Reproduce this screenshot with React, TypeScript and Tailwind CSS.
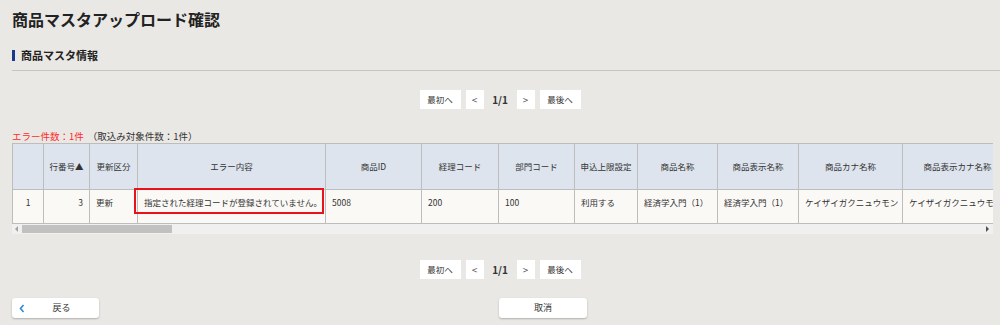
import React from "react";

const font = { fontFamily: '"Noto Sans CJK JP", "Noto Sans", sans-serif' };

function Pager() {
  return (
    <div className="flex items-center justify-center gap-[5px] text-[#333]">
      <button className="h-[19px] w-[41px] bg-white text-[8.5px]">最初へ</button>
      <button className="h-[19px] w-[18px] bg-white text-[10px] text-[#555]">&lt;</button>
      <span className="w-[23px] text-center text-[10px] font-bold">1/1</span>
      <button className="h-[19px] w-[18px] bg-white text-[10px] text-[#555]">&gt;</button>
      <button className="h-[19px] w-[41px] bg-white text-[8.5px]">最後へ</button>
    </div>
  );
}

export default function App() {
  return (
    <div style={font} className="h-[325px] w-[1000px] overflow-hidden bg-[#eae8e4] text-[#333]">
      <div className="px-[12px] pt-[7px]">
        <h1 className="text-[16px] font-bold leading-[24px] text-[#222]">商品マスタアップロード確認</h1>

        {/* section heading */}
        <div className="mt-[17px] flex items-center gap-[6px]">
          <span className="h-[11px] w-[3px] bg-[#1d3a8a]" />
          <h2 className="text-[11px] font-bold leading-[14px] text-[#222]">商品マスタ情報</h2>
        </div>
        <div className="mt-[8px] mr-[-12px] h-px bg-[#c4c4c4]" />

        <div className="mt-[19px]">
          <Pager />
        </div>

        <p className="mt-[20px] text-[9.5px] leading-[14px]">
          <span className="text-[#ff2a2a]">エラー件数：1件</span>
          <span className="ml-[4px]">（取込み対象件数：1件）</span>
        </p>

        {/* table */}
        <div className="w-[981px] overflow-hidden">
          <table className="w-[1000px] table-fixed border-collapse text-[8.5px]">
            <colgroup>
              <col className="w-[31px]" />
              <col className="w-[46px]" />
              <col className="w-[48px]" />
              <col className="w-[188px]" />
              <col className="w-[96px]" />
              <col className="w-[77px]" />
              <col className="w-[76px]" />
              <col className="w-[63px]" />
              <col className="w-[80px]" />
              <col className="w-[81px]" />
              <col className="w-[104px]" />
              <col className="w-[110px]" />
            </colgroup>
            <thead>
              <tr className="h-[46px] bg-[#dde4ee]">
                {["", "行番号▲", "更新区分", "エラー内容", "商品ID", "経理コード", "部門コード", "申込上限設定", "商品名称", "商品表示名称", "商品カナ名称", "商品表示カナ名称"].map((h, i) => (
                  <th key={i} className="border border-[#bdbdbd] px-[4px] text-center font-normal whitespace-nowrap">
                    {h}
                  </th>
                ))}
              </tr>
            </thead>
            <tbody>
              <tr className="h-[34px] bg-[#faf9f6] align-top">
                <td className="border border-[#bdbdbd] pt-[6px] text-center">1</td>
                <td className="border border-[#bdbdbd] px-[6px] pt-[6px] text-right">3</td>
                <td className="border border-[#bdbdbd] px-[6px] pt-[6px]">更新</td>
                <td className="relative border border-[#bdbdbd] px-[6px] pt-[6px] whitespace-nowrap">
                  指定された経理コードが登録されていません。
                  <div className="absolute left-[-4px] top-[-2px] h-[26px] w-[190px] border-2 border-[#e8121b]" />
                </td>
                <td className="border border-[#bdbdbd] px-[6px] pt-[6px]">5008</td>
                <td className="border border-[#bdbdbd] px-[6px] pt-[6px]">200</td>
                <td className="border border-[#bdbdbd] px-[6px] pt-[6px]">100</td>
                <td className="border border-[#bdbdbd] px-[6px] pt-[6px] whitespace-nowrap">利用する</td>
                <td className="border border-[#bdbdbd] px-[6px] pt-[6px] whitespace-nowrap">経済学入門（1）</td>
                <td className="border border-[#bdbdbd] px-[6px] pt-[6px] whitespace-nowrap">経済学入門（1）</td>
                <td className="border border-[#bdbdbd] px-[6px] pt-[6px] whitespace-nowrap">ケイザイガクニュウモン</td>
                <td className="overflow-hidden border border-[#bdbdbd] px-[6px] pt-[6px] whitespace-nowrap">ケイザイガクニュウモン</td>
              </tr>
            </tbody>
          </table>
          {/* scrollbar */}
          <div className="flex h-[10px] items-center bg-[#f0f0f0]">
            <span className="ml-[3px] h-0 w-0 border-y-[3px] border-r-[3px] border-y-transparent border-r-[#a3a3a3]" />
            <div className="ml-[4px] h-[8px] w-[150px] bg-[#c1c1c1]" />
            <span className="ml-auto mr-[4px] h-0 w-0 border-y-[3px] border-l-[3px] border-y-transparent border-l-[#505050]" />
          </div>
        </div>

        <div className="mt-[26px]">
          <Pager />
        </div>

        <div className="mt-[19px] flex">
          <button className="relative flex h-[20px] w-[87px] items-center justify-center rounded-[3px] bg-white text-[9px] shadow-[0_1px_2px_rgba(0,0,0,0.25)]">
            <svg className="absolute left-[7px]" width="6" height="9" viewBox="0 0 6 9">
              <path d="M4.5 1 L1.5 4.5 L4.5 8" fill="none" stroke="#2a8ad6" strokeWidth="1.6" />
            </svg>
            <span className="ml-[12px]">戻る</span>
          </button>
          <button className="ml-[400px] h-[20px] w-[88px] rounded-[3px] bg-white text-[9px] shadow-[0_1px_2px_rgba(0,0,0,0.25)]">
            取消
          </button>
        </div>
      </div>
    </div>
  );
}
